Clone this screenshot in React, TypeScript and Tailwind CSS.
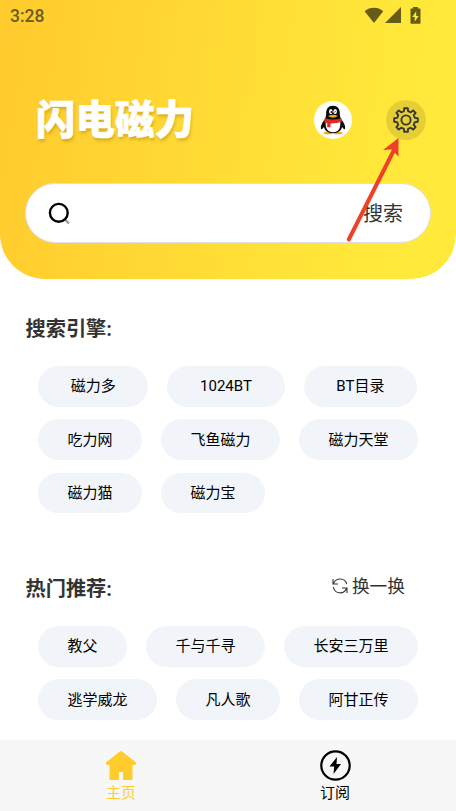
import { useState } from 'react';

const engineRows = [
  { pad: 'px-[32.7px]', items: ['磁力多', '1024BT', 'BT目录'] },
  { pad: 'px-[29.5px]', items: ['吃力网', '飞鱼磁力', '磁力天堂'] },
  { pad: 'px-[29.5px]', items: ['磁力猫', '磁力宝'] },
];

const hotRows = [
  { pad: 'px-[29.5px]', items: ['教父', '千与千寻', '长安三万里'] },
  { pad: 'px-[29.5px]', items: ['逃学威龙', '凡人歌', '阿甘正传'] },
];

function ChipRows({ rows }: { rows: { pad: string; items: string[] }[] }) {
  return (
    <div className="flex flex-col gap-[12.5px] pl-[38px]">
      {rows.map((row, i) => (
        <div key={i} className="flex gap-[19px]">
          {row.items.map(item => (
            <button
              key={item}
              className={`h-[40.8px] shrink-0 rounded-full bg-[#f1f5fa] pt-px text-[15px] leading-none whitespace-nowrap text-black ${row.pad}`}
            >
              {item}
            </button>
          ))}
        </div>
      ))}
    </div>
  );
}

function StatusBar() {
  return (
    <div className="flex h-[30px] items-center justify-between pr-[35px] pl-[10px] text-[#6b5b1c]">
      <span className="pt-[2px] text-[17.5px] font-medium">3:28</span>
      <div className="flex items-center">
        <svg width="20" height="17" viewBox="0 0 20 17" fill="#665c18">
          <path d="M0.5 4.2C6-0.3 14-0.3 19.2 4.2L10 16Z" />
        </svg>
        <svg className="ml-[1px]" width="17" height="17" viewBox="0 0 17 17" fill="#665c18">
          <path d="M16 0V16H0Z" />
        </svg>
        <svg className="ml-[8px]" width="11" height="17" viewBox="0 0 11 17">
          <path fill="#665c18" d="M3 0h5v1.500h2q.5 0 .5.5v14q0 .7-.7.700H1.200q-.7 0-.7-.7V2q0-.5.5-.5h2Z" />
          <path fill="#ffe83a" d="M6.200 4.200 2.300 10h2.400v4.800L8.600 9H6.200Z" />
        </svg>
      </div>
    </div>
  );
}

function Penguin() {
  return (
    <svg width="26" height="30" viewBox="0 0 26 30">
      <ellipse cx="8.5" cy="28" rx="4.8" ry="1.3" fill="#f7a51c" />
      <ellipse cx="17.5" cy="28" rx="4.8" ry="1.3" fill="#f7a51c" />
      <path d="M5 14C1.8 18 .2 21 1 24c.5 1 2-.5 3-2 1 4 4 6 9 6s8-2 9-6c1 1.500 2.500 3 3 2 .8-3-.8-6-4-10Z" fill="#0b0b0d" />
      <path d="M13 .8c-4.600 0-7.200 3.400-6.800 8.700L5.200 14h15.600l-1-4.500C20.200 4.200 17.600.8 13 .8Z" fill="#0b0b0d" />
      <path d="M5.800 16c-.8 8 2 11.200 7.200 11.200S21 24 20.200 16Z" fill="#fff" />
      <ellipse cx="10.800" cy="6.600" rx="1.800" ry="2.500" fill="#fff" />
      <ellipse cx="15.200" cy="6.600" rx="1.800" ry="2.500" fill="#fff" />
      <circle cx="11.400" cy="7" r=".9" fill="#111" />
      <path d="M14.500 7.200q.9-1.500 1.700 0" stroke="#111" strokeWidth=".8" fill="none" />
      <path d="M8 11q5-2.500 10 0-5 3.400-10 0Z" fill="#f7a51c" />
      <path d="M4.600 13.200q8.400 2.800 16.800 0l.6 3.400q-4.500 2-11.500 1.900v3.700H7.200v-3.900l-3-1Z" fill="#dc2a25" />
    </svg>
  );
}

function Gear() {
  return (
    <svg width="26" height="26" viewBox="0 0 26 26" fill="none" stroke="#393932" strokeWidth="1.900" strokeLinejoin="round">
      <path d="M10.900 4.200 11.200 1.200h3.600l.3 3 2.700 1.100 2.400-1.900 2.400 2.400-1.900 2.400 1.100 2.700 3 .3v3.600l-3 .3-1.100 2.700 1.900 2.400-2.400 2.400-2.400-1.900-2.700 1.100-.3 3h-3.600l-.3-3-2.700-1.100-2.400 1.900-2.400-2.400 1.900-2.400-1.100-2.700-3-.3v-3.600l3-.3 1.100-2.700-1.900-2.400 2.400-2.400 2.400 1.900Z" />
      <circle cx="13" cy="13" r="4.600" />
    </svg>
  );
}

export default function App() {
  const [query, setQuery] = useState('');

  return (
    <div className="relative flex h-[811px] w-[456px] flex-col overflow-hidden bg-white font-['Roboto','Noto_Sans_CJK_SC',sans-serif]">
      <header className="h-[279px] shrink-0 rounded-b-[45px] bg-[linear-gradient(100deg,#ffca2d_0%,#ffe83a_80%,#ffea3b_100%)]">
        <StatusBar />

        <div className="mt-[70px] flex h-[40px] items-center pr-[30px] pl-[36px]">
          <h1 className="flex-1 pt-[2px] text-[39.500px] leading-none font-black whitespace-nowrap text-white [-webkit-text-stroke:0.600px_white] [text-shadow:1px_3px_3px_rgba(150,110,0,0.35)]">
            闪电磁力
          </h1>
          <button className="mr-[34px] flex h-[38px] w-[38px] items-center justify-center rounded-full bg-white">
            <Penguin />
          </button>
          <button className="flex h-[40px] w-[40px] items-center justify-center rounded-full bg-[#e6cf36]">
            <Gear />
          </button>
        </div>

        <div className="mx-[25px] mt-[43px] flex h-[60px] items-center rounded-full border-[1.500px] border-[#dedfe2] bg-white pr-[27px] pl-[21px]">
          <svg className="shrink-0" width="24" height="24" viewBox="0 0 24 24" fill="none">
            <path d="m17.500 18 4.500 4.500" stroke="#999" strokeWidth="2.200" />
            <circle cx="11.800" cy="11.800" r="8.900" stroke="#000" strokeWidth="2.400" />
          </svg>
          <input
            value={query}
            onChange={e => setQuery(e.target.value)}
            className="min-w-0 flex-1 bg-transparent px-3 text-base outline-none"
          />
          <button className="pt-[2px] text-[20px] leading-none text-[#333]">搜索</button>
        </div>
      </header>

      <main className="flex-1">
        <h2 className="mt-[35px] ml-[25.5px] h-[30px] text-[20.200px] leading-[30px] font-bold text-[#333]">搜索引擎:</h2>
        <div className="mt-[22px]">
          <ChipRows rows={engineRows} />
        </div>

        <div className="mt-[61px] flex h-[30px] items-center justify-between pr-[51px] pl-[25.5px]">
          <h2 className="text-[20.200px] leading-[30px] font-bold text-[#333]">热门推荐:</h2>
          <button className="mt-[-3px] flex items-center gap-[4px] text-[17.700px] leading-none text-[#333]">
            <svg className="mt-[-3px]" width="16" height="16" viewBox="0 0 16 16" fill="none" stroke="#333" strokeWidth="1.100">
              <path d="M1 1v5h5M1.500 5.500C4-.5 13-.5 14.700 6" />
              <path d="M15 15v-5h-5M14.500 10.500C12 16.500 3 16.500 1.300 9" />
            </svg>
            换一换
          </button>
        </div>
        <div className="mt-[21.500px]">
          <ChipRows rows={hotRows} />
        </div>
      </main>

      <nav className="flex h-[71px] shrink-0 bg-[#f7f7f7] px-[14px] text-[15px] leading-none">
        <button className="flex flex-1 flex-col items-center pt-[10px] text-[#ffcc2e]">
          <svg width="32" height="31" viewBox="0 0 32 31" fill="currentColor">
            <path d="M14.800 1.600q1.200-.9 2.400 0L30.500 12q1 1 .5 2t-1.500 1H27.500v13.500q0 1.500-1.500 1.500H18v-8h-4v8H6q-1.500 0-1.500-1.500V15H2.500q-1 0-1.500-1t.5-2Z" />
          </svg>
          <span className="mt-[5px]">主页</span>
        </button>
        <button className="flex flex-1 flex-col items-center pt-[10px] text-black">
          <svg width="31" height="31" viewBox="0 0 31 31">
            <circle cx="15.500" cy="15.500" r="14.200" fill="none" stroke="#000" strokeWidth="2.200" />
            <path d="m17 7-7.500 9.500h4.700L13.500 24 21 14h-4.500Z" />
          </svg>
          <span className="mt-[5px]">订阅</span>
        </button>
      </nav>

      {/* pointer to the settings button */}
      <svg className="pointer-events-none absolute top-[136px] left-[343px]" width="60" height="108" viewBox="0 0 60 108">
        <path d="M5.800 103.500 51 14" stroke="#ef4029" strokeWidth="4" strokeLinecap="round" />
        <path d="M55.500 2 40 14l8.500-.500L55.500 20.500Z" fill="#ef4029" />
      </svg>
    </div>
  );
}
